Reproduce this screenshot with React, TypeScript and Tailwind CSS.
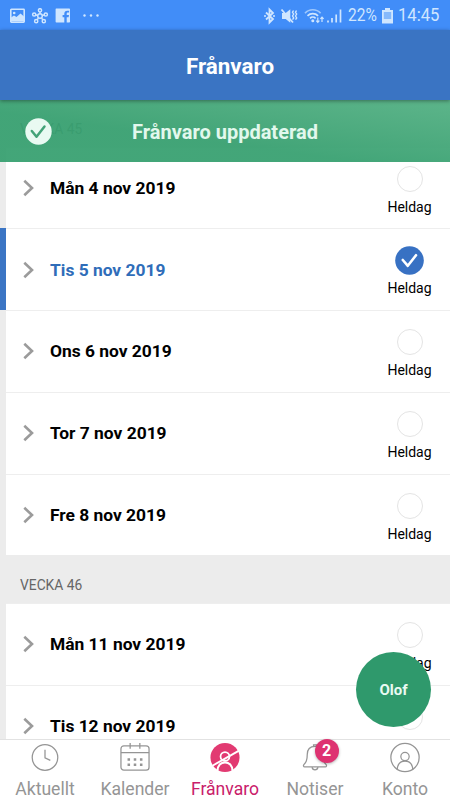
import clsx from 'clsx';

interface Day {
  label: string;
  selected?: boolean;
}

interface Week {
  title: string;
  days: Day[];
}

const weeks: Week[] = [
  {
    title: 'Vecka 45',
    days: [
      { label: 'Mån 4 nov 2019' },
      { label: 'Tis 5 nov 2019', selected: true },
      { label: 'Ons 6 nov 2019' },
      { label: 'Tor 7 nov 2019' },
      { label: 'Fre 8 nov 2019' },
    ],
  },
  {
    title: 'Vecka 46',
    days: [{ label: 'Mån 11 nov 2019' }, { label: 'Tis 12 nov 2019' }],
  },
];

const StatusBar = () => (
  <div className="flex h-[30px] shrink-0 items-center justify-between bg-[#418df8] pt-[1px] pr-[11px] pl-[10px] text-[#cfe6ff]">
    <svg width="92" height="16" viewBox="0 0 92 16" fill="none" stroke="currentColor">
      {/* Picture */}
      <rect x="0.8" y="1.3" width="13.4" height="12.9" rx="0.6" strokeWidth="1.6" />
      <circle cx="4.2" cy="5" r="1.3" fill="currentColor" stroke="none" />
      <path d="M1 12V9.5l3-2L6.5 9l4-3.5 3.5 3v5H1z" fill="currentColor" stroke="none" />
      {/* Hub */}
      <g strokeWidth="1.5">
        <circle cx="30" cy="8" r="2.3" />
        <circle cx="30" cy="2.3" r="1.6" />
        <circle cx="24.2" cy="6.5" r="1.6" />
        <circle cx="35.8" cy="6.5" r="1.6" />
        <circle cx="26.2" cy="13.2" r="1.6" />
        <circle cx="33.8" cy="13.2" r="1.6" />
        <path d="M30 4v1.7M26 7l1.8.4M34 7l-1.8.4M27.2 11.7l1.2-1.6M32.8 11.7l-1.2-1.6" />
      </g>
      {/* Facebook */}
      <path d="M46.2.5h13a.8.8 0 0 1 .8.8v12.4a.8.8 0 0 1-.8.8h-2.5V9.3h1.9l.4-2.3h-2.3V5.8c0-.8.4-1.2 1.3-1.2h1.1V2.7h-1.8c-2 0-3 1.2-3 3V7h-1.7v2.3h1.7v5.2h-7.9a.8.8 0 0 1-.8-.8V1.3a.8.8 0 0 1 .6-.8z" fill="currentColor" stroke="none" />
      <g fill="currentColor" stroke="none">
        <circle cx="74.5" cy="7.5" r="1.2" />
        <circle cx="81" cy="7.5" r="1.2" />
        <circle cx="87.5" cy="7.5" r="1.2" />
      </g>
    </svg>

    <div className="flex items-center">
      <svg width="80" height="18" viewBox="0 0 80 18" fill="none" stroke="currentColor">
        {/* Bluetooth */}
        <path d="M2 5.5l7 6.5-3.5 3.5v-13L9 6l-7 6.5" strokeWidth="1.8" />
        <path d="M0 9h2M9 9h2" strokeWidth="1.6" />
        {/* Muted, vibrating */}
        <path d="M18 6h3.7l4.6-3.7v13.4L21.7 12H18z" fill="currentColor" stroke="none" />
        <path d="M17.5 2.5l11.5 13" strokeWidth="1.8" />
        <path d="M29.5 3.5l-1 1.8 1.2 1.8-1.2 1.9 1.2 1.9-1.2 1.8M32.5 3.5l-1 1.8 1.2 1.8-1.2 1.9 1.2 1.9-1.2 1.8" strokeWidth="1.4" />
        {/* Wifi */}
        <g strokeWidth="1.7">
          <path d="M41 6.2a10.5 10.5 0 0 1 15.6 0" opacity="0.65" />
          <path d="M43.5 8.8a7.4 7.4 0 0 1 10.6 0M46 11.3a4 4 0 0 1 5.6 0" />
        </g>
        <circle cx="48.8" cy="13.8" r="1.5" fill="currentColor" stroke="none" />
        <path d="M53.8 10.5v4.7M52.2 13.7l1.6 1.6 1.6-1.6M58 15v-4.7M56.4 11.8l1.6-1.6 1.6 1.6" strokeWidth="1.2" />
        {/* Signal */}
        <path d="M64 15.5v-2M68 15.5V11M72.2 15.5V7.5M76.5 15.5v-13" strokeWidth="1.7" />
      </svg>
      <span className="ml-[4px] w-[30px] text-[18.5px] leading-none">
        <span className="inline-block origin-left scale-x-[0.84]">22%</span>
      </span>
      <svg width="11" height="16" viewBox="0 0 11 16" className="ml-[4px]">
        <path d="M3 0h5v2h3v13.5H0V2h3z" fill="currentColor" />
        <path d="M1.8 4h7.4v7H1.8z" fill="#86b9fb" />
      </svg>
      <span className="ml-[5px] w-[41px] text-[18.5px] leading-none">
        <span className="inline-block origin-left scale-x-[0.9]">14:45</span>
      </span>
    </div>
  </div>
);

const DayRow = ({ label, selected }: Day) => (
  <div className="flex h-[81.8px]">
    <div className={clsx('w-[6px] shrink-0', selected ? 'bg-[#3b75c4]' : 'bg-[#ececec]')} />
    <div className="flex flex-1 items-start justify-between border-t border-[#eeeeee] bg-white pr-[18px] pl-[17px]">
      <div className="flex h-full items-center">
        <svg width="12" height="18" viewBox="0 0 12 18" fill="none" stroke="#9b9b9b" strokeWidth="2.6">
          <path d="M1.3 1.8L9 9l-7.7 7.2" />
        </svg>
        <span className={clsx('ml-[15px] text-[17.4px] font-bold', selected ? 'text-[#2f6db9]' : 'text-black')}>
          {label}
        </span>
      </div>
      <div className="flex w-[45px] flex-col items-center">
        <div className="mt-[16px] flex h-[30px] items-center">
          {selected ? (
            <svg width="29" height="29" viewBox="0 0 29 29" fill="none">
              <circle cx="14.5" cy="14.5" r="14.3" fill="#3871c3" />
              <path d="M7.8 14l5 5.8L21 9.2" stroke="#fff" strokeWidth="2.6" strokeLinecap="round" strokeLinejoin="round" />
            </svg>
          ) : (
            <div className="size-[26px] rounded-full border border-[#e4e4e4]" />
          )}
        </div>
        <span className="mt-[4px] text-[14px] leading-[18px] text-black">Heldag</span>
      </div>
    </div>
  </div>
);

const navIcon = 'h-[32px] w-[32px]';

const ClockIcon = () => (
  <svg className={navIcon} viewBox="0 0 32 32" fill="none" stroke="currentColor" strokeWidth="1.3">
    <circle cx="16" cy="16" r="13.2" />
    <path d="M16 8v8.3l5.5 2.7" />
  </svg>
);

const CalendarIcon = () => (
  <svg className={navIcon} viewBox="0 0 32 32" fill="none" stroke="currentColor" strokeWidth="1.3">
    <rect x="1.5" y="4" width="29" height="25" rx="3" />
    <path d="M1.5 11h29M11 1v6M21 1v6" />
    <path d="M8.3 18h2.6M14.7 18h2.6M21.1 18h2.6M8.3 23.5h2.6M14.7 23.5h2.6M21.1 23.5h2.6" strokeWidth="2.6" />
  </svg>
);

const AbsenceIcon = () => (
  <svg className={navIcon} viewBox="0 0 32 32" fill="none">
    <circle cx="16" cy="16" r="15" fill="#e23a72" />
    <circle cx="16" cy="15" r="4.6" stroke="#fff" strokeWidth="1.8" />
    <path d="M8.3 29.5c0-5 3.3-8.5 7.7-8.5s7.7 3.5 7.7 8.5" stroke="#fff" strokeWidth="2.2" />
    <path d="M3 24.5L30.5 9" stroke="#fff" strokeWidth="2" />
  </svg>
);

const BellIcon = () => (
  <svg className={navIcon} viewBox="0 0 32 32" fill="none" stroke="currentColor" strokeWidth="1.3">
    <path d="M16 4.5c-5.5 0-8 3.8-8 8.5 0 6.5-1.4 8-3.6 10.5-.6.8-.3 2.3.9 2.3h21.4c1.2 0 1.5-1.5.9-2.3C25.4 21 24 19.5 24 13c0-4.7-2.5-8.5-8-8.5z" />
    <path d="M13 26c.2 1.7 1.4 2.7 3 2.7s2.8-1 3-2.7M14.5 4.5V3h3v1.5" />
  </svg>
);

const AccountIcon = () => (
  <svg className={navIcon} viewBox="0 0 32 32" fill="none" stroke="currentColor" strokeWidth="1.3">
    <circle cx="16" cy="16" r="14.6" />
    <circle cx="16" cy="15" r="4.3" />
    <path d="M8 28.2c.4-5.2 3.5-8.4 8-8.4s7.6 3.2 8 8.4" />
  </svg>
);

const tabs = [
  { label: 'Aktuellt', icon: ClockIcon },
  { label: 'Kalender', icon: CalendarIcon },
  { label: 'Frånvaro', icon: AbsenceIcon, active: true },
  { label: 'Notiser', icon: BellIcon, badge: 2 },
  { label: 'Konto', icon: AccountIcon },
];

const App = () => {
  return (
    <div className="flex h-[800px] w-[450px] flex-col overflow-hidden bg-white font-['Roboto',sans-serif]">
      <StatusBar />

      <header className="relative z-20 flex h-[70px] shrink-0 items-center justify-center bg-[#3a74c3] pt-[4px] pl-[10px] shadow-[0_1px_4px_rgba(0,0,0,0.4)]">
        <h1 className="text-[22.4px] font-bold text-white">Frånvaro</h1>
      </header>

      <main className="relative h-[639px] shrink-0 overflow-hidden">
        {/* Toast */}
        <div className="absolute inset-x-0 top-0 z-10 flex h-[62px] items-center justify-center bg-linear-to-tr from-[#37a070]/94 from-40% to-[#53b184]/94">
          <svg width="27" height="27" viewBox="0 0 27 27" fill="none" className="absolute top-[18px] left-[25px]">
            <circle cx="13.5" cy="13.5" r="13.2" fill="#e9faf2" />
            <path d="M6.8 13l4.7 5.7 8-10.2" stroke="#43a378" strokeWidth="2.5" strokeLinecap="round" strokeLinejoin="round" />
          </svg>
          <span className="pt-[2px] text-[20px] font-bold text-[#e2f8ed]">Frånvaro uppdaterad</span>
        </div>

        {/* Weeks */}
        <div className="-mt-[1px]">
          {weeks.map((week) => (
            <section key={week.title}>
              <h2 className="h-[47.5px] bg-[#ececec] pt-[20px] pl-[20px] text-[13.8px] leading-[20px] text-[#666] uppercase">
                {week.title}
              </h2>
              {week.days.map((day) => (
                <DayRow key={day.label} {...day} />
              ))}
            </section>
          ))}
        </div>

        <button className="absolute right-[19px] bottom-[12px] size-[75px] rounded-full bg-[#2f996c] pt-[2px] text-[15px] font-bold text-[#e9faf2]">
          Olof
        </button>
      </main>

      <nav className="flex h-[61px] shrink-0 border-t border-[#e2e2e2] bg-white">
        {tabs.map(({ label, icon: Icon, active, badge }) => (
          <div
            key={label}
            className={clsx('relative flex w-[90px] flex-col items-center pt-[2px]', active ? 'text-[#c9206a]' : 'text-[#959595]')}
          >
            <Icon />
            <span className="mt-[5px] text-[17.6px] leading-[22px]">{label}</span>
            {badge && (
              <span className="absolute -top-[1px] left-[44.5px] flex size-[24px] items-center justify-center rounded-full bg-[#de3271] text-[16px] font-bold text-white shadow-[0_1px_3px_rgba(0,0,0,0.3)]">
                {badge}
              </span>
            )}
          </div>
        ))}
      </nav>
    </div>
  );
};

export default App;
